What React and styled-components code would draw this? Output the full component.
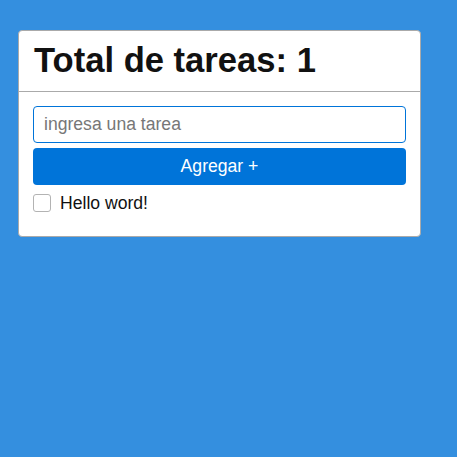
import React from "react";
import styled, { createGlobalStyle } from "styled-components";

const Global = createGlobalStyle`
  html, body { margin: 0; padding: 0; background: #348fdf; }
  body { font-family: "Liberation Sans", Arial, sans-serif; min-height: 457px; }
  * { box-sizing: border-box; }
`;

const Page = styled.div`
  padding: 30px 18px;
`;

const Card = styled.section`
  width: 403px;
  background: #fff;
  border: 1px solid #aaaaaa;
  border-radius: 4px;
`;

const Header = styled.header`
  padding: 9px 15px 11px;
  border-bottom: 1px solid #aaaaaa;
`;

const Title = styled.h1`
  margin: 0;
  font-size: 34.6px;
  line-height: 40px;
  font-weight: 700;
  color: #111;
`;

const Body = styled.div`
  padding: 14px 14px 23px;
`;

const Form = styled.form`
  display: flex;
  flex-direction: column;
  gap: 5px;
`;

const Input = styled.input`
  height: 37px;
  width: 100%;
  border: 1px solid #0074d9;
  border-radius: 4px;
  padding: 0 10px;
  font-family: inherit;
  font-size: 17.6px;
  color: #222;
  outline: none;
  &::placeholder { color: #777; }
`;

const Button = styled.button`
  height: 37px;
  width: 100%;
  border: none;
  border-radius: 4px;
  background: #0074d9;
  color: #fff;
  font-family: inherit;
  font-size: 17.6px;
  cursor: pointer;
`;

const List = styled.ul`
  list-style: none;
  margin: 8px 0 0;
  padding: 0;
`;

const Item = styled.li`
  display: flex;
  align-items: center;
  gap: 9px;
  height: 20px;
  font-size: 17.6px;
  color: #111;
`;

const Check = styled.input`
  appearance: none;
  margin: 0;
  width: 18px;
  height: 18px;
  border: 1px solid #b3b3b3;
  border-radius: 3px;
  background: #fff;
  flex: none;
`;

export default function App() {
  const tasks = ["Hello word!"];
  return (
    <>
      <Global />
      <Page>
        <Card>
          <Header>
            <Title>Total de tareas: {tasks.length}</Title>
          </Header>
          <Body>
            <Form onSubmit={(e) => e.preventDefault()}>
              <Input placeholder="ingresa una tarea" />
              <Button type="submit">Agregar +</Button>
            </Form>
            <List>
              {tasks.map((t) => (
                <Item key={t}>
                  <Check type="checkbox" />
                  <span>{t}</span>
                </Item>
              ))}
            </List>
          </Body>
        </Card>
      </Page>
    </>
  );
}
